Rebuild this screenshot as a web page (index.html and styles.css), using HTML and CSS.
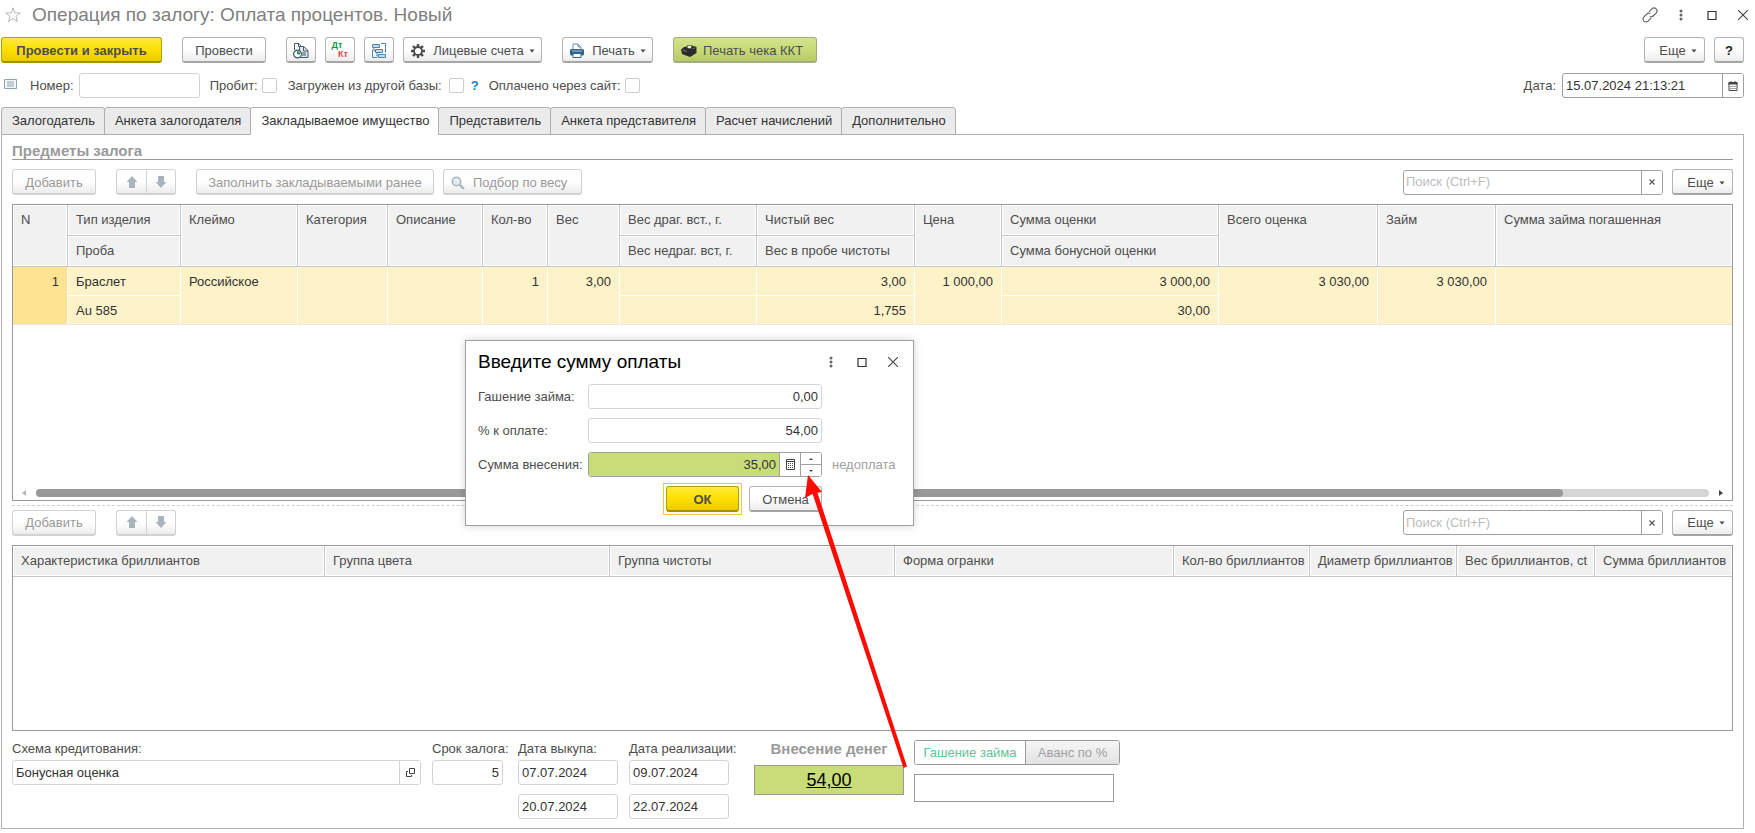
FILE: index.html
```html
<!DOCTYPE html>
<html lang="ru">
<head>
<meta charset="utf-8">
<title>Операция по залогу: Оплата процентов</title>
<link rel="stylesheet" href="styles.css">
</head>
<body>
<svg class="defs" aria-hidden="true">
  <symbol id="i-up" viewBox="0 0 12 12"><path d="M6 0 11.500 6H9v6H3V6H.5z" fill="#a9b5bd"/></symbol>
  <symbol id="i-down" viewBox="0 0 12 12"><path d="M6 12 11.500 6H9V0H3v6H.5z" fill="#a9b5bd"/></symbol>
  <symbol id="i-dots" viewBox="0 0 4 12"><g fill="#666"><circle cx="2" cy="2" r="1.500"/><circle cx="2" cy="6" r="1.500"/><circle cx="2" cy="10" r="1.500"/></g></symbol>
  <symbol id="i-max" viewBox="0 0 10 10"><path d="M1 1.500h8v8H1z" fill="none" stroke="#333" stroke-width="1.200"/></symbol>
  <symbol id="i-close" viewBox="0 0 10 10"><path d="M0 0l10 10M10 0L0 10" stroke="#444" stroke-width="1.100"/></symbol>
  <symbol id="i-caret" viewBox="0 0 6 4"><path d="M.5.5h5L3 3.500z" fill="#444"/></symbol>
  <symbol id="i-x" viewBox="0 0 6 6"><path d="M.5.5l5 5M5.500.5l-5 5" stroke="#555" stroke-width="1.100"/></symbol>
</svg>

<header class="titlebar">
  <svg class="star" viewBox="0 0 16 16" aria-hidden="true"><path d="M8 .8l1.800 5.100 5.500.1-4.300 3.300 1.500 5.300L8 11.500l-4.500 3.100L5 9.300.7 6l5.500-.1z" fill="none" stroke="#b5b5b5"/></svg>
  <h1 class="title">Операция по залогу: Оплата процентов. Новый</h1>
  <div class="win-tools">
    <button class="plain" aria-label="Ссылка"><svg width="16" height="16" viewBox="0 0 16 16"><g fill="none" stroke="#666" stroke-width="1.200"><path d="M7 4.800l2.900-2.900a2.900 2.900 0 0 1 4.200 4.200L11.200 9a2.900 2.900 0 0 1-3.400.5"/><path d="M9 11.200l-2.900 2.900a2.900 2.900 0 0 1-4.200-4.200L4.800 7a2.900 2.900 0 0 1 3.400-.5"/></g></svg></button>
    <button class="plain" aria-label="Меню"><svg width="4" height="12"><use href="#i-dots"/></svg></button>
    <button class="plain" aria-label="Развернуть"><svg width="10" height="10"><use href="#i-max"/></svg></button>
    <button class="plain" aria-label="Закрыть"><svg width="10" height="10"><use href="#i-close"/></svg></button>
  </div>
</header>

<div class="toolbar main-tools">
  <button class="btn primary post-close">Провести и закрыть</button>
  <button class="btn post">Провести</button>
  <div class="group">
    <button class="btn icon-btn" aria-label="Отчеты"><svg width="16" height="16" viewBox="0 0 16 16"><path d="M1.500 7V.5h4.200l2.800 3V9" fill="#fff" stroke="#44586c"/><path d="M5.500.5v3h3" fill="none" stroke="#44586c"/><path d="M6.500 3.500h4.200l4.300 4v7H6.500z" fill="#e4e8ec" stroke="#44586c"/><path d="M10.500 3.500V8H15M9 10h4M9 12h4" fill="none" stroke="#44586c"/><circle cx="4.500" cy="11" r="3.900" fill="#fff" stroke="#44586c" stroke-width="1.200"/><path d="M4.500 11V8.300A2.700 2.700 0 0 1 7.200 11z" fill="#1ea34a"/><path d="M4.500 8.300V11h2.700" fill="none" stroke="#1ea34a"/></svg></button>
    <button class="btn icon-btn dtkt" aria-label="Движения"><span class="dt">Дт</span><span class="kt">Кт</span></button>
    <button class="btn icon-btn" aria-label="Структура"><svg width="16" height="16" viewBox="0 0 16 16"><g fill="#c3dcea" stroke="#4e85a8"><path d="M1.500 1.500h7v3h-7zM4.500 6.500h7v3h-7zM7.500 11.500h7v3h-7z"/></g><path d="M10 .5h4.500v9M1.500 6.500v8H6M3 4.500v3.500h1.500M6 9.500V13h1.500" fill="none" stroke="#4e85a8"/></svg></button>
    <button class="btn accounts"><svg width="16" height="16" viewBox="0 0 16 16"><path d="M8 1v2.500M8 12.500V15M1 8h2.500M12.500 8H15M3 3l1.900 1.900M11.100 11.100 13 13M3 13l1.900-1.900M11.100 4.900 13 3" stroke="#4a4a4a" stroke-width="2.400"/><circle cx="8" cy="8" r="4" fill="#fff" stroke="#4a4a4a" stroke-width="1.800"/></svg>Лицевые счета<svg class="caret"><use href="#i-caret"/></svg></button>
  </div>
  <button class="btn print"><svg width="16" height="16" viewBox="0 0 16 16"><path d="M4 6V1h5l3 3v2" fill="#fff" stroke="#6f91ad"/><path d="M9 1v3h3" fill="none" stroke="#6f91ad"/><rect x="1" y="6" width="14" height="6.500" rx="1.500" fill="#33638c"/><path d="M3 8h10" stroke="#a9c6dc"/><path d="M4 10.500h8v4H4z" fill="#fff" stroke="#33638c"/></svg>Печать<svg class="caret"><use href="#i-caret"/></svg></button>
  <button class="btn green kkt"><svg width="16" height="12" viewBox="0 0 16 12"><path d="M0 4.500 3 2l3-.5.5-1.300 4.500.3L15.500 2v6L9 12 1 9z" fill="#2c2c2c"/><path d="M7 .8l3.500.3-.7 2.400-3.500-.5z" fill="#e8e8e8"/><path d="M1.500 5l4.500 1.500M11.500 3.500l2.500-.5" stroke="#777"/></svg>Печать чека ККТ</button>
  <div class="right">
    <button class="btn more">Еще<svg class="caret"><use href="#i-caret"/></svg></button>
    <button class="btn help">?</button>
  </div>
</div>

<div class="fields">
  <svg class="note" width="13" height="10" viewBox="0 0 13 10" aria-hidden="true"><path d="M.5.5h12v9H.5z" fill="#f2f6f9" stroke="#8fa3b5"/><path d="M3 3h7M3 5h7M3 7h7" stroke="#8fa3b5"/></svg>
  <label for="num">Номер:</label><input class="box num" id="num" type="text">
  <label class="probit" for="probit">Пробит:</label><input class="check" id="probit" type="checkbox">
  <label class="loaded" for="loaded">Загружен из другой базы:</label><input class="check wide" id="loaded" type="checkbox">
  <a class="hint" href="#">?</a>
  <label class="paid" for="paid">Оплачено через сайт:</label><input class="check" id="paid" type="checkbox">
  <div class="right date-field"><label for="date">Дата:</label>
    <div class="combo strong date"><input id="date" type="text" value="15.07.2024 21:13:21"><button aria-label="Календарь"><svg width="10" height="10" viewBox="0 0 10 10"><path d="M1 1.500h8v8H1z" fill="none" stroke="#444"/><path d="M.5 2.500h9" stroke="#444" stroke-width="2"/><path d="M3 0v2M7 0v2" stroke="#444"/><path d="M2.500 5.500h5M2.500 7.500h5" stroke="#444" stroke-dasharray="1 1"/></svg></button></div>
  </div>
</div>

<nav class="tabs">
  <button class="tab">Залогодатель</button><button class="tab">Анкета залогодателя</button><button class="tab active">Закладываемое имущество</button><button class="tab">Представитель</button><button class="tab">Анкета представителя</button><button class="tab">Расчет начислений</button><button class="tab">Дополнительно</button>
</nav>

<main class="panel">
  <h2 class="section">Предметы залога</h2>
  <div class="toolbar">
    <button class="btn add" disabled>Добавить</button>
    <div class="updown"><button class="btn" disabled aria-label="Вверх"><svg width="12" height="12"><use href="#i-up"/></svg></button><button class="btn" disabled aria-label="Вниз"><svg width="12" height="12"><use href="#i-down"/></svg></button></div>
    <button class="btn fill" disabled>Заполнить закладываемыми ранее</button>
    <button class="btn pick" disabled><svg width="14" height="14" viewBox="0 0 14 14"><circle cx="5.500" cy="5.500" r="4.200" fill="#e3ecf2" stroke="#a9b5bd" stroke-width="1.600"/><path d="M8.800 8.800l4 4" stroke="#a9b5bd" stroke-width="2.400"/></svg>Подбор по весу</button>
    <div class="right">
      <div class="combo strong search"><input type="text" placeholder="Поиск (Ctrl+F)" aria-label="Поиск"><button aria-label="Очистить"><svg width="6" height="6"><use href="#i-x"/></svg></button></div>
      <button class="btn more">Еще<svg class="caret"><use href="#i-caret"/></svg></button>
    </div>
  </div>

  <div class="grid items">
    <table>
      <colgroup><col class="w55"><col class="w113"><col class="w117"><col class="w90"><col class="w95"><col class="w65"><col class="w72"><col class="w137"><col class="w158"><col class="w87"><col class="w217"><col class="w159"><col class="w118"><col></colgroup>
      <thead>
        <tr><th rowspan="2">N</th><th>Тип изделия</th><th rowspan="2">Клеймо</th><th rowspan="2">Категория</th><th rowspan="2">Описание</th><th rowspan="2">Кол-во</th><th rowspan="2">Вес</th><th>Вес драг. вст., г.</th><th>Чистый вес</th><th rowspan="2">Цена</th><th>Сумма оценки</th><th rowspan="2">Всего оценка</th><th rowspan="2">Займ</th><th rowspan="2">Сумма займа погашенная</th></tr>
        <tr><th>Проба</th><th>Вес недраг. вст, г.</th><th>Вес в пробе чистоты</th><th>Сумма бонусной оценки</th></tr>
      </thead>
      <tbody>
        <tr><td class="n cur" rowspan="2">1</td><td>Браслет</td><td rowspan="2">Российское</td><td rowspan="2"></td><td rowspan="2"></td><td class="n" rowspan="2">1</td><td class="n" rowspan="2">3,00</td><td></td><td class="n">3,00</td><td class="n" rowspan="2">1 000,00</td><td class="n">3 000,00</td><td class="n" rowspan="2">3 030,00</td><td class="n" rowspan="2">3 030,00</td><td rowspan="2"></td></tr>
        <tr><td>Au 585</td><td></td><td class="n">1,755</td><td class="n">30,00</td></tr>
      </tbody>
    </table>
    <div class="scroll">
      <svg width="4" height="6" viewBox="0 0 4 6"><path d="M4 0v6L0 3z" fill="#b5b5b5"/></svg>
      <div class="track"><div class="thumb"></div></div>
      <svg width="4" height="6" viewBox="0 0 4 6"><path d="M0 0v6l4-3z" fill="#444"/></svg>
    </div>
  </div>

  <div class="splitter"></div>

  <div class="toolbar">
    <button class="btn add" disabled>Добавить</button>
    <div class="updown"><button class="btn" disabled aria-label="Вверх"><svg width="12" height="12"><use href="#i-up"/></svg></button><button class="btn" disabled aria-label="Вниз"><svg width="12" height="12"><use href="#i-down"/></svg></button></div>
    <div class="right">
      <div class="combo strong search"><input type="text" placeholder="Поиск (Ctrl+F)" aria-label="Поиск"><button aria-label="Очистить"><svg width="6" height="6"><use href="#i-x"/></svg></button></div>
      <button class="btn more">Еще<svg class="caret"><use href="#i-caret"/></svg></button>
    </div>
  </div>

  <div class="grid stones">
    <table>
      <colgroup><col class="w312"><col class="w285"><col class="w285"><col class="w279"><col class="w136"><col class="w147"><col class="w138"><col class="w137"></colgroup>
      <thead><tr><th>Характеристика бриллиантов</th><th>Группа цвета</th><th>Группа чистоты</th><th>Форма огранки</th><th>Кол-во бриллиантов</th><th>Диаметр бриллиантов</th><th>Вес бриллиантов, ct</th><th>Сумма бриллиантов</th></tr></thead>
    </table>
  </div>

  <div class="bottom">
    <div class="stack scheme"><label for="scheme">Схема кредитования:</label>
      <div class="combo"><input id="scheme" type="text" value="Бонусная оценка"><button aria-label="Открыть"><svg width="9" height="9" viewBox="0 0 9 9"><path d="M3.500.5h5v5h-5zM2 3.500H.5v5h5V7" fill="none" stroke="#444"/></svg></button></div></div>
    <div class="stack term"><label for="term">Срок залога:</label><input class="box n" id="term" type="text" value="5"></div>
    <div class="stack day"><label for="d1">Дата выкупа:</label><input class="box" id="d1" type="text" value="07.07.2024"><input class="box second" type="text" aria-label="Дата выкупа, конец" value="20.07.2024"></div>
    <div class="stack day"><label for="d2">Дата реализации:</label><input class="box" id="d2" type="text" value="09.07.2024"><input class="box second" type="text" aria-label="Дата реализации, конец" value="22.07.2024"></div>
    <div class="money"><div class="money-title">Внесение денег</div><a class="money-sum" href="#">54,00</a></div>
    <div class="pay"><div class="seg"><button class="on">Гашение займа</button><button disabled>Аванс по %</button></div><input class="pay-box" type="text" aria-label="Сумма"></div>
  </div>
</main>

<section class="dialog" role="dialog" aria-labelledby="dlg-title">
  <div class="dlg-head"><h2 class="title dlg-title" id="dlg-title">Введите сумму оплаты</h2>
    <div class="win-tools">
      <button class="plain" aria-label="Меню"><svg width="4" height="12"><use href="#i-dots"/></svg></button>
      <button class="plain" aria-label="Развернуть"><svg width="10" height="10"><use href="#i-max"/></svg></button>
      <button class="plain" aria-label="Закрыть"><svg width="10" height="10"><use href="#i-close"/></svg></button>
    </div></div>
  <div class="form">
    <label for="loan">Гашение займа:</label><input class="box n" id="loan" type="text" value="0,00"><span></span>
    <label for="perc">% к оплате:</label><input class="box n" id="perc" type="text" value="54,00"><span></span>
    <label for="sum">Сумма внесения:</label>
    <div class="combo strong sum"><input class="n" id="sum" type="text" value="35,00"><button aria-label="Калькулятор"><svg width="9" height="11" viewBox="0 0 9 11"><path d="M.5.5h8v10h-8zM.5 2.500h8" fill="none" stroke="#444"/><path d="M2 4.500h5M2 6.500h5M2 8.500h5" stroke="#444" stroke-dasharray="1 1"/></svg></button>
      <div class="spin"><button aria-label="Больше"><svg width="4" height="2" viewBox="0 0 4 2"><path d="M0 2h4L2 0z" fill="#444"/></svg></button><button aria-label="Меньше"><svg width="4" height="2" viewBox="0 0 4 2"><path d="M0 0h4L2 2z" fill="#444"/></svg></button></div></div>
    <span class="under">недоплата</span>
  </div>
  <div class="dlg-foot"><div class="focus-frame"><button class="btn primary">ОК</button></div><button class="btn cancel">Отмена</button></div>
</section>

<svg class="pointer" width="110" height="300" viewBox="0 0 110 300" aria-hidden="true"><path d="M12 17 16.500 15 107 291.500 103.500 293z" fill="#ff0a00"/><path d="M8 0 22 17 13.500 18.500 5 23z" fill="#ff0a00"/></svg>
</body>
</html>
```
FILE: styles.css
```css
* { box-sizing: border-box; }
body {
  margin: 0;
  min-height: 100vh;
  padding: 0 11px 4px 1px;
  display: flex;
  flex-direction: column;
  position: relative;
  background: #fff;
  color: #4d4d4d;
  font: 13px/16px "Liberation Sans", Arial, sans-serif;
}
.defs { position: absolute; width: 0; height: 0; }
button, input { font: inherit; color: inherit; margin: 0; }
svg { flex: none; display: block; }
label { white-space: nowrap; }
.right { margin-left: auto; display: flex; align-items: center; }
.n { text-align: right; }

.titlebar { display: flex; align-items: center; height: 29px; margin-bottom: 8px; }
.star { width: 16px; height: 16px; margin-left: 4px; }
.title { margin: 0 0 0 11px; font-size: 19px; line-height: 24px; font-weight: normal; color: #7f7f7f; }
.win-tools { display: flex; align-items: center; gap: 21px; margin-left: auto; }
.titlebar .win-tools { margin-right: -4px; }
.plain { display: flex; justify-content: center; width: 10px; padding: 0; border: 0; background: none; }

.toolbar { display: flex; align-items: center; height: 26px; flex: none; }
.btn {
  display: flex; align-items: center; justify-content: center;
  height: 26px; padding: 2px 0 0; white-space: nowrap;
  border: 1px solid #b3b3b3; border-bottom: 2px solid #a6a6a6; border-radius: 3px;
  background: linear-gradient(#fff, #fff 50%, #ececec);
}
.btn:disabled { color: #999; border-color: #d2d2d2; }
.caret { width: 6px; height: 4px; margin-left: 5px; }
.primary {
  font-weight: bold; border-color: #b3a000; border-bottom-color: #a08f00;
  background: linear-gradient(#ffea3d, #ffe000 50%, #ecca00);
}
.green { border-color: #a3ad7e; background: linear-gradient(#d2e38c, #c8db78 50%, #b6ca66); }
.post-close { width: 161px; }
.post { width: 84px; margin-left: 20px; }
.group { display: flex; gap: 9px; margin: 0 20px; }
.icon-btn { width: 30px; }
.dtkt { flex-direction: column; padding: 0; font: bold 9px/9px "Liberation Sans", Arial, sans-serif; }
.dt { color: #0a9a48; margin-right: 6px; }
.kt { color: #e04848; margin-left: 6px; }
.accounts { width: 139px; }
.accounts svg:first-child, .print svg:first-child { margin-right: 7px; }
.print { width: 91px; }
.kkt { width: 144px; margin-left: 20px; padding-left: 7px; justify-content: flex-start; }
.kkt svg { margin-right: 6px; }
.more { width: 61px; padding-left: 7px; }
.help { width: 30px; margin-left: 9px; font-weight: bold; color: #222; }

.fields { display: flex; align-items: center; height: 25px; margin: 10px 0 9px; }
.note { margin: 0 13px 4px 3px; }
.box {
  height: 25px; width: 100%; min-width: 0; padding: 0 3px;
  border: 1px solid #d4d4d4; border-radius: 3px; background: #fff; color: #333;
}
.num { width: 121px; margin-left: 5px; }
.check { appearance: none; width: 15px; height: 15px; border: 1px solid #ccc; border-radius: 2px; background: #fff; margin-left: 4px; }
.wide { margin-left: 7px; }
.probit { margin-left: 10px; }
.loaded { margin-left: 11px; }
.hint { margin-left: 7px; color: #1a7fc0; font-weight: bold; text-decoration: none; }
.paid { margin-left: 10px; }
.combo { display: flex; height: 25px; border: 1px solid #d4d4d4; border-radius: 3px; overflow: hidden; background: #fff; }
.combo input { flex: 1; min-width: 0; padding: 0 3px; border: 0; background: none; color: #333; }
.combo > button { display: flex; align-items: center; justify-content: center; width: 21px; padding: 0; border: 0; border-left: 1px solid #d4d4d4; background: #fff; }
.strong { border-color: #a0a0a0; }
.strong > button { border-left-color: #a0a0a0; }
.date { width: 182px; margin-left: 6px; }
.search { width: 260px; margin-right: 9px; }
.search input { padding: 0 2px; }
.search input::placeholder { color: #bcbcbc; opacity: 1; }

.tabs { display: flex; position: relative; margin-bottom: -1px; }
.tab {
  height: 28px; padding: 0 9px 0 10px; margin-right: -1px; color: #333;
  border: 1px solid #b0b0b0; border-radius: 3px 3px 0 0; background: #ebebeb; white-space: nowrap;
}
.tab.active { background: #fff; border-bottom-color: #fff; }

.panel { flex: 1; display: flex; flex-direction: column; border: 1px solid #b0b0b0; padding: 0 10px 9px; }
.section { flex: none; margin: 0 0 9px; padding: 8px 0 0; border-bottom: 1px solid #999; font-size: 15px; line-height: 16px; color: #999; }
.add { width: 84px; }
.updown { display: flex; margin: 0 20px; }
.updown .btn { width: 31px; padding: 0; }
.updown .btn:first-child { border-radius: 3px 0 0 3px; }
.updown .btn:last-child { width: 29px; border-left: 0; border-radius: 0 3px 3px 0; }
.fill { width: 238px; }
.pick { width: 139px; margin-left: 9px; padding-left: 7px; justify-content: flex-start; }
.pick svg { margin-right: 8px; }

.grid { display: flex; flex-direction: column; margin-top: 9px; border: 1px solid #999; overflow: hidden; }
.items { flex: 297 0 auto; min-height: 180px; height: 0; }
.stones { flex: 186 0 auto; min-height: 100px; height: 0; }
table { width: 100%; table-layout: fixed; border-spacing: 0; }
th, td { padding: 7px 8px 0; white-space: nowrap; vertical-align: top; }
th {
  height: 31px; text-align: left; font-weight: normal;
  border: solid #c6c6c6; border-width: 0 1px 1px 0; background: #f1f1f1; box-shadow: inset 0 0 0 1px #fff;
}
td { height: 29px; color: #333; background: #fdf2c8; border: solid #fff; border-width: 0 1px 1px 0; }
td.n { text-align: right; }
td.cur { background: #fee392; }
tbody td[rowspan], tbody tr:last-child td { border-bottom-color: #e6e6e6; }
thead tr:first-child th:last-child, tbody tr:first-child td:last-child { border-right: 0; }
.w55 { width: 55px; } .w113 { width: 113px; } .w117 { width: 117px; } .w90 { width: 90px; }
.w95 { width: 95px; } .w65 { width: 65px; } .w72 { width: 72px; } .w137 { width: 137px; }
.w158 { width: 158px; } .w87 { width: 87px; } .w217 { width: 217px; } .w159 { width: 159px; }
.w118 { width: 118px; } .w312 { width: 312px; } .w285 { width: 285px; } .w279 { width: 279px; }
.w136 { width: 136px; } .w147 { width: 147px; } .w138 { width: 138px; }
.scroll { display: flex; align-items: center; gap: 10px; margin-top: auto; padding: 0 9px 3px; }
.track { flex: 1; height: 8px; border-radius: 4px; background: #d5d5d5; }
.thumb { width: 91.3%; height: 8px; border-radius: 4px; background: #999; }
.splitter { flex: none; height: 5px; margin: 0 0 4px; border-bottom: 1px dashed #d0d0d0; }

.bottom { display: flex; align-items: flex-start; margin-top: 9px; }
.stack { display: flex; flex-direction: column; margin-right: 11px; }
.stack label { height: 20px; padding-top: 1px; }
.scheme { width: 409px; }
.term { width: 75px; }
.term .box { width: 71px; }
.day { width: 100px; }
.second { margin-top: 9px; }
.money { width: 150px; margin-left: 14px; text-align: center; }
.money-title { height: 25px; padding-top: 1px; font-size: 15px; font-weight: bold; color: #999; }
.money-sum { display: block; height: 30px; border: 1px solid #999; background: #c8dc78; color: #000; font-size: 18px; line-height: 28px; }
.pay { margin-left: 10px; }
.seg { display: flex; height: 25px; border: 1px solid #999; border-radius: 3px; overflow: hidden; }
.seg button { width: 94px; padding: 0; border: 0; border-left: 1px solid #999; background: linear-gradient(#f6f6f6, #e2e2e2); color: #a0a0a0; white-space: nowrap; }
.seg .on { width: 110px; border-left: 0; background: #fff; color: #5dc596; }
.pay-box { display: block; width: 200px; height: 28px; margin-top: 9px; border: 1px solid #999; background: #fff; }

.dialog { position: absolute; left: 465px; top: 340px; width: 449px; height: 186px; padding: 0 12px; border: 1px solid #a0a0a0; background: #fff; box-shadow: 0 0 8px rgba(0, 0, 0, .18); }
.dlg-head { display: flex; align-items: center; height: 43px; padding-bottom: 2px; }
.dlg-title { margin: 0; color: #000; }
.dialog .win-tools { margin-right: 3px; }
.form { display: grid; grid-template-columns: 110px 234px 1fr; row-gap: 9px; align-items: center; }
.sum input { background: #c8dc78; }
.spin { display: flex; flex-direction: column; width: 21px; border-left: 1px solid #a0a0a0; }
.spin button { flex: 1; display: flex; align-items: center; justify-content: center; padding: 0; border: 0; background: #fff; }
.spin button + button { border-top: 1px solid #a0a0a0; }
.under { margin-left: 10px; color: #a0a0a0; }
.dlg-foot { display: flex; justify-content: flex-end; align-items: center; gap: 7px; margin: 6px 79px 0 0; }
.dlg-foot .btn { width: 73px; }
.focus-frame { padding: 2px; border: 1px solid #f5c93c; }
.pointer { position: absolute; left: 800px; top: 475px; pointer-events: none; }
```
